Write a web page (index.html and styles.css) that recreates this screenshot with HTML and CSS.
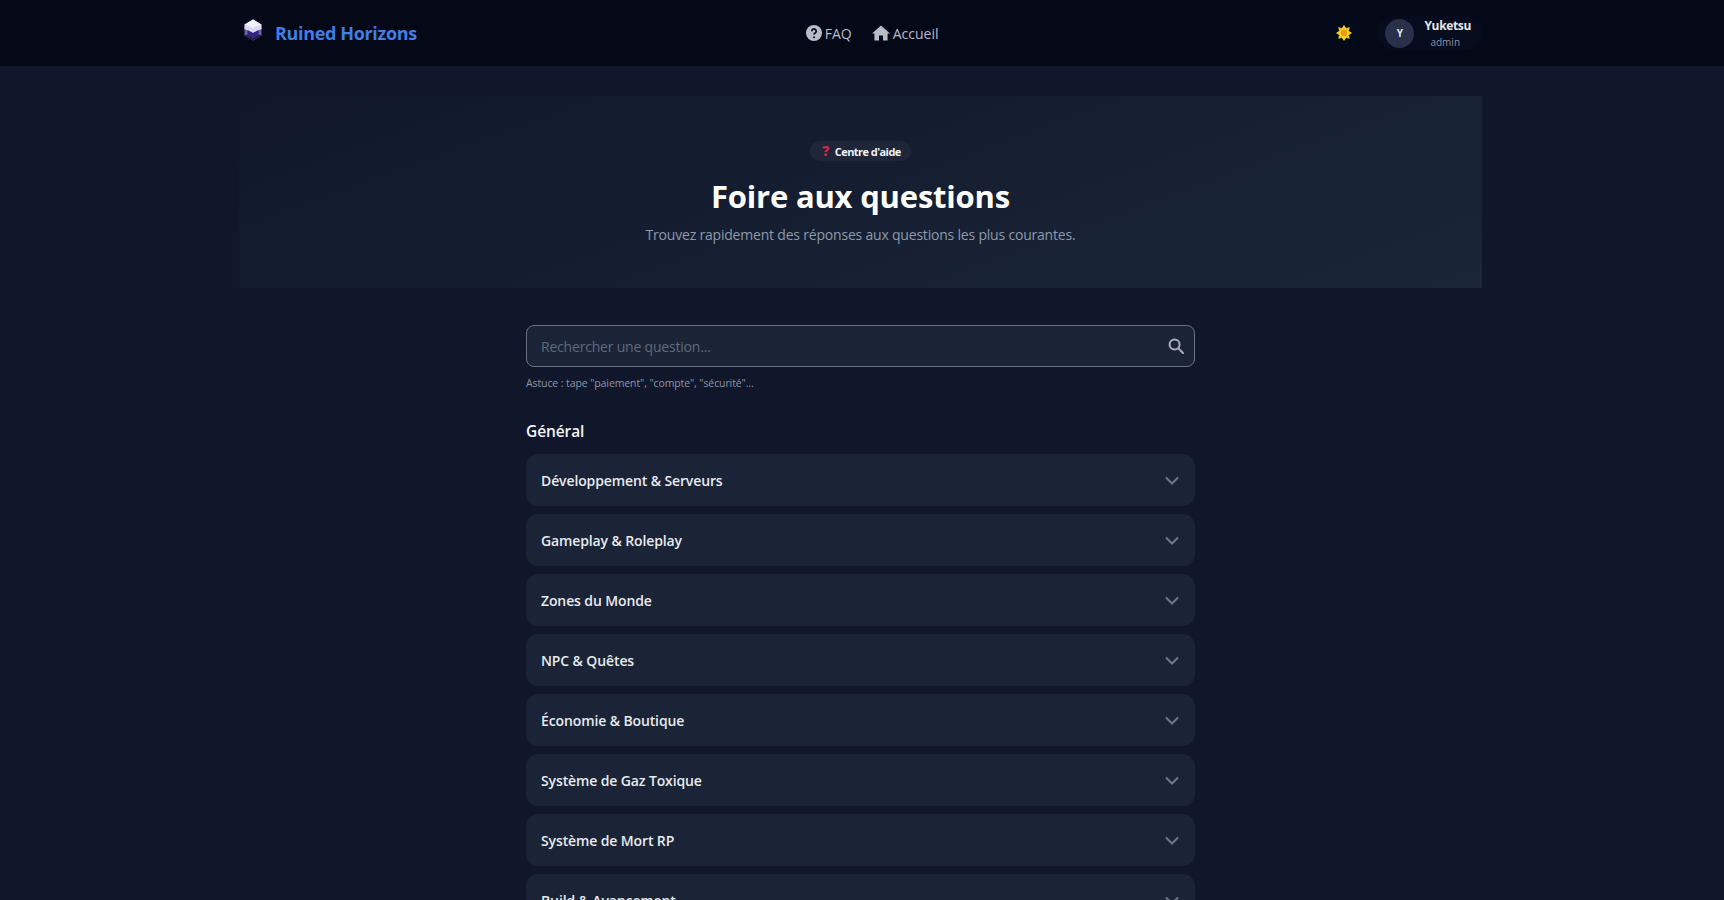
FILE: index.html
```html
<!DOCTYPE html>
<html lang="fr">
<head>
	<meta charset="UTF-8">
	<meta name="viewport" content="width=device-width, initial-scale=1.0">
	<title>Foire aux questions</title>
	<link rel="stylesheet" href="styles.css">
</head>
<body>

	<nav class="navbar">
		<div class="nav-inner">
			<a class="brand">
				<svg class="brand-logo" viewBox="0 0 18 22">
					<polygon points="9,0.5 17.5,5.5 17.5,16.5 9,21.5 0.5,16.5 0.5,5.5" fill="#6a5fb0"/>
					<polygon points="9,0.5 17.5,5.5 17.5,10 9,14 0.5,10 0.5,5.5" fill="#d9d8f0"/>
					<polygon points="9,0.5 17,5.5 9,9 1,5.5" fill="#f2f2fb"/>
					<polygon points="3.5,11 9,14 14.5,11 14.5,15.5 9,19 3.5,15.5" fill="#34227c"/>
					<polygon points="9,19 14.5,15.5 17.5,16.5 9,21.5 0.5,16.5 3.5,15.5" fill="#221a4e"/>
				</svg>
				<span>Ruined Horizons</span>
			</a>
			<div class="nav-links">
				<a class="nav-link">
					<svg class="nav-icon" viewBox="0 0 16 16">
						<circle cx="8" cy="8" r="8" fill="#b9bcc6"/>
						<path d="M5.8 6.2a2.2 2.2 0 1 1 3.4 1.8c-.8.5-1.2.9-1.2 1.6" fill="none" stroke="#05091a" stroke-width="1.7"/>
						<circle cx="8" cy="12.2" r="1" fill="#05091a"/>
					</svg>
					FAQ
				</a>
				<a class="nav-link">
					<svg class="nav-icon home-icon" viewBox="0 0 18 16">
						<path d="M9 0.5 L18 8.4 H15.6 V15.5 H11 V10.5 H7 V15.5 H2.4 V8.4 H0 Z" fill="#b9bcc6"/>
					</svg>
					Accueil
				</a>
			</div>
			<div class="nav-right">
				<button class="theme-btn">
					<svg class="sun-icon" viewBox="0 0 16 16">
						<g fill="#f0cf1e">
							<polygon points="8,0 10,3 6,3"/>
							<polygon points="8,16 10,13 6,13"/>
							<polygon points="0,8 3,6 3,10"/>
							<polygon points="16,8 13,6 13,10"/>
							<polygon points="2.3,2.3 5.8,3 3,5.8"/>
							<polygon points="13.7,2.3 10.2,3 13,5.8"/>
							<polygon points="2.3,13.7 5.8,13 3,10.2"/>
							<polygon points="13.7,13.7 10.2,13 13,10.2"/>
						</g>
						<circle cx="8" cy="8" r="5.4" fill="#f3d21f"/>
						<circle cx="8" cy="8" r="3.2" fill="#e89a0c"/>
					</svg>
				</button>
				<div class="user-pill">
					<div class="avatar">Y</div>
					<div class="user-meta">
						<div class="user-name">Yuketsu</div>
						<div class="user-role">admin</div>
					</div>
				</div>
			</div>
		</div>
	</nav>

	<header class="hero">
		<div class="hero-badge"><span class="hero-mark">?</span>Centre d'aide</div>
		<h1>Foire aux questions</h1>
		<p>Trouvez rapidement des réponses aux questions les plus courantes.</p>
	</header>

	<main class="faq">
		<div class="search-box">
			<input class="search-input" type="text" placeholder="Rechercher une question...">
			<svg class="search-icon" viewBox="0 0 16 16">
				<circle cx="6.6" cy="6.6" r="5" fill="none" stroke="#aab0bb" stroke-width="2"/>
				<path d="M10.4 10.4 L15 15" stroke="#aab0bb" stroke-width="2" stroke-linecap="round"/>
			</svg>
		</div>
		<p class="search-hint">Astuce : tape "paiement", "compte", "sécurité"...</p>

		<h2 class="section-title">Général</h2>

		<div class="faq-list">
			<div class="faq-item"><span>Développement &amp; Serveurs</span><svg class="chevron" viewBox="0 0 14 9"><path d="M1 1.5 L7 7.5 L13 1.5"/></svg></div>
			<div class="faq-item"><span>Gameplay &amp; Roleplay</span><svg class="chevron" viewBox="0 0 14 9"><path d="M1 1.5 L7 7.5 L13 1.5"/></svg></div>
			<div class="faq-item"><span>Zones du Monde</span><svg class="chevron" viewBox="0 0 14 9"><path d="M1 1.5 L7 7.5 L13 1.5"/></svg></div>
			<div class="faq-item"><span>NPC &amp; Quêtes</span><svg class="chevron" viewBox="0 0 14 9"><path d="M1 1.5 L7 7.5 L13 1.5"/></svg></div>
			<div class="faq-item"><span>Économie &amp; Boutique</span><svg class="chevron" viewBox="0 0 14 9"><path d="M1 1.5 L7 7.5 L13 1.5"/></svg></div>
			<div class="faq-item"><span>Système de Gaz Toxique</span><svg class="chevron" viewBox="0 0 14 9"><path d="M1 1.5 L7 7.5 L13 1.5"/></svg></div>
			<div class="faq-item"><span>Système de Mort RP</span><svg class="chevron" viewBox="0 0 14 9"><path d="M1 1.5 L7 7.5 L13 1.5"/></svg></div>
			<div class="faq-item"><span>Build &amp; Avancement</span><svg class="chevron" viewBox="0 0 14 9"><path d="M1 1.5 L7 7.5 L13 1.5"/></svg></div>
		</div>
	</main>

</body>
</html>
```

FILE: styles.css
```css
html, body {
	height: 900px;
	overflow: hidden;
}
body {
	margin: 0;
	padding-right: 3px;
	background-color: #10172b;
	color: #ffffff;
	font-family: 'Open Sans', 'Noto Sans', sans-serif;
}
.navbar {
	height: 66px;
	margin-right: -3px;
	padding-right: 3px;
	background-color: #040817;
}
.nav-inner {
	width: 1243px;
	height: 100%;
	margin: 0 auto;
	display: flex;
	justify-content: space-between;
	align-items: center;
}
.brand {
	display: flex;
	align-items: center;
	gap: 13px;
	color: #3f7fe6;
	font-size: 18px;
	font-weight: 700;
	letter-spacing: -0.35px;
	padding-left: 5px;
}
.brand-logo {
	width: 18px;
	height: 22px;
	margin-top: -6px;
}
.nav-links {
	display: flex;
	gap: 20px;
	margin-left: 1px;
}
.nav-link {
	display: flex;
	align-items: center;
	gap: 3px;
	color: #b9bcc6;
	font-size: 14px;
}
.nav-icon {
	width: 16px;
	height: 16px;
}
.home-icon {
	width: 18px;
}
.nav-right {
	display: flex;
	align-items: center;
	gap: 14px;
}
.theme-btn {
	width: 36px;
	height: 36px;
	padding: 0;
	border: none;
	border-radius: 50%;
	background-color: #050a1b;
	display: flex;
	align-items: center;
	justify-content: center;
}
.sun-icon {
	width: 16px;
	height: 16px;
}
.user-pill {
	height: 34px;
	display: flex;
	align-items: center;
	gap: 10px;
	padding: 0 11px 0 9px;
	border-radius: 20px;
	background-color: #060b1d;
}
.avatar {
	width: 29px;
	height: 29px;
	border-radius: 50%;
	background-color: #28304a;
	color: #e5e7eb;
	font-size: 10px;
	font-weight: 700;
	display: flex;
	align-items: center;
	justify-content: center;
}
.user-meta {
	padding-top: 2px;
	text-align: center;
}
.user-name {
	font-size: 12px;
	font-weight: 700;
	line-height: 16px;
	letter-spacing: -0.35px;
	color: #e5e7eb;
}
.user-role {
	padding-right: 5px;
	font-size: 10px;
	line-height: 17px;
	color: #8f93a3;
}
.hero {
	width: 1243px;
	height: 192px;
	margin: 30px auto 0;
	box-sizing: border-box;
	padding-top: 43px;
	text-align: center;
	background: linear-gradient(160deg, #10172b 0%, #1a2637 100%);
}
.hero-badge {
	display: inline-block;
	height: 20px;
	line-height: 20px;
	padding: 0 10px;
	border-radius: 10px;
	background-color: #1e2638;
	font-size: 11px;
	font-weight: 700;
	letter-spacing: -0.55px;
	color: #f1f2f5;
}
.hero-mark {
	color: #d8234f;
	font-weight: 800;
	font-size: 14px;
	margin: 0 6px 0 2px;
}
.hero h1 {
	margin: 13px 0 0;
	font-size: 31px;
	line-height: 44px;
	font-weight: 700;
	letter-spacing: -0.2px;
}
.hero p {
	margin: 7px 0 0;
	font-size: 14px;
	line-height: 20px;
	letter-spacing: -0.2px;
	color: #8e99ab;
}
.faq {
	width: 669px;
	margin: 37px auto 0;
}
.search-box {
	position: relative;
}
.search-input {
	display: block;
	width: 100%;
	height: 42px;
	box-sizing: border-box;
	padding: 0 44px 0 14px;
	border: 1px solid #6b7280;
	border-radius: 8px;
	background-color: #1a2436;
	color: #ffffff;
	font-family: inherit;
	font-size: 14px;
	letter-spacing: -0.2px;
}
.search-input::placeholder {
	color: #5f6a7c;
}
.search-icon {
	position: absolute;
	right: 11px;
	top: 13px;
	width: 16px;
	height: 16px;
}
.search-hint {
	margin: 8px 0 0;
	font-size: 10.5px;
	line-height: 16px;
	letter-spacing: -0.1px;
	color: #8e95a3;
}
.section-title {
	margin: 27px 0 0;
	font-size: 15.5px;
	line-height: 26px;
	font-weight: 600;
	letter-spacing: -0.1px;
	color: #f3f4f6;
}
.faq-list {
	margin-top: 10px;
	display: flex;
	flex-direction: column;
	gap: 8px;
}
.faq-item {
	height: 52px;
	flex-shrink: 0;
	box-sizing: border-box;
	padding: 0 16px 0 15px;
	display: flex;
	align-items: center;
	justify-content: space-between;
	border-radius: 12px;
	background-color: #1a2436;
	color: #e8eaee;
	font-size: 14px;
	font-weight: 600;
	letter-spacing: -0.12px;
}
.chevron {
	width: 14px;
	height: 9px;
	fill: none;
	stroke: #6f7787;
	stroke-width: 2;
}
```
